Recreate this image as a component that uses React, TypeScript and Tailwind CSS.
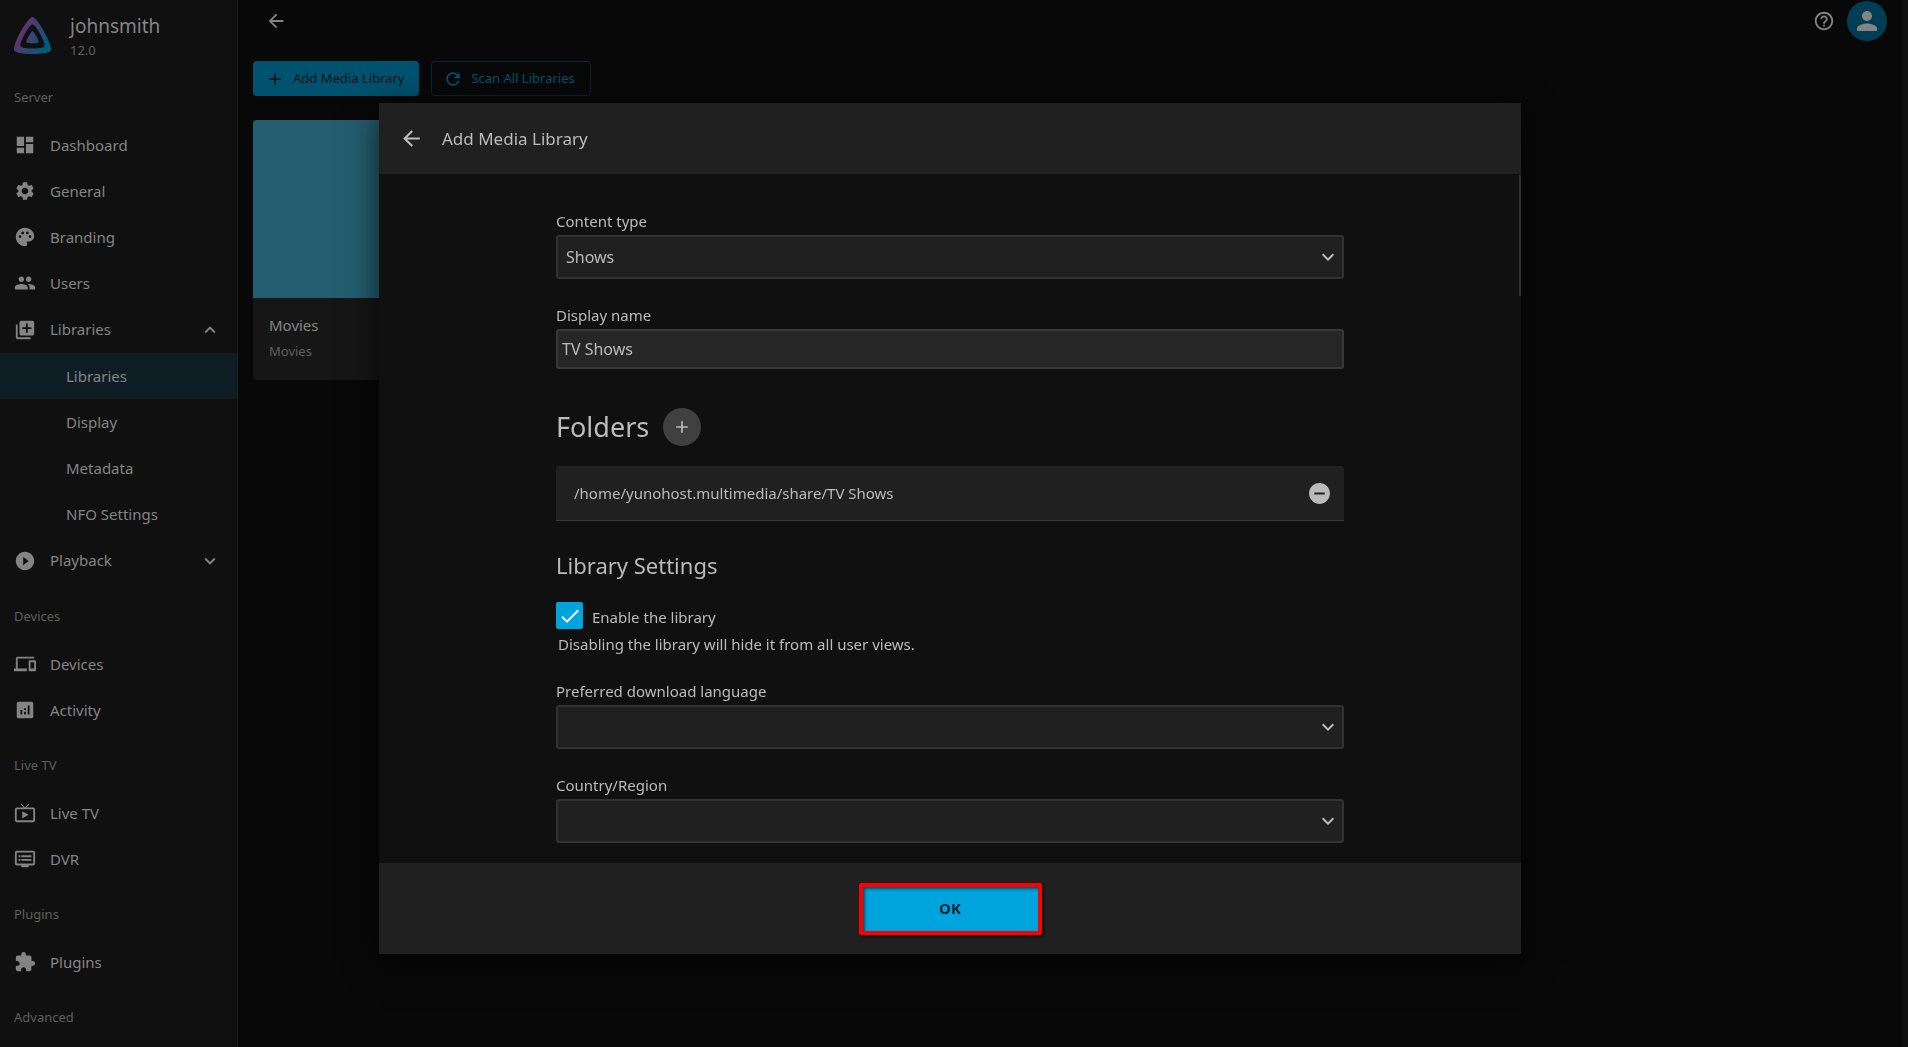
import React, { useState } from 'react';
import type { IconType } from 'react-icons';
import {
  MdAdd, MdAnalytics, MdArrowBack, MdCheck, MdDashboard, MdDevices, MdDvr,
  MdExpandLess, MdExpandMore, MdExtension, MdHelpOutline, MdLibraryAdd, MdLiveTv,
  MdPalette, MdPeople, MdPerson, MdPlayCircleFilled, MdRefresh, MdRemoveCircle, MdSettings
} from 'react-icons/md';

type NavItem = {
  label: string;
  icon: IconType;
  open?: boolean;
  children?: string[];
};

const sections: { title: string; items: NavItem[] }[] = [
  {
    title: 'Server',
    items: [
      { label: 'Dashboard', icon: MdDashboard },
      { label: 'General', icon: MdSettings },
      { label: 'Branding', icon: MdPalette },
      { label: 'Users', icon: MdPeople },
      { label: 'Libraries', icon: MdLibraryAdd, open: true, children: ['Libraries', 'Display', 'Metadata', 'NFO Settings'] },
      { label: 'Playback', icon: MdPlayCircleFilled, open: false, children: [] }
    ]
  },
  {
    title: 'Devices',
    items: [
      { label: 'Devices', icon: MdDevices },
      { label: 'Activity', icon: MdAnalytics }
    ]
  },
  {
    title: 'Live TV',
    items: [
      { label: 'Live TV', icon: MdLiveTv },
      { label: 'DVR', icon: MdDvr }
    ]
  },
  { title: 'Plugins', items: [{ label: 'Plugins', icon: MdExtension }] },
  { title: 'Advanced', items: [] }
];

function Logo() {
  return (
    <svg viewBox="0 0 24 24" className="mt-[3px] size-[37px] shrink-0" aria-hidden="true">
      <defs>
        <linearGradient id="logo" gradientUnits="userSpaceOnUse" x1="5" y1="9" x2="21" y2="18">
          <stop offset="0" stopColor="#5f3470" />
          <stop offset="1" stopColor="#005b7c" />
        </linearGradient>
      </defs>
      <path
        fill="url(#logo)"
        d="M12 .002C8.826.002-1.398 18.537.16 21.666c1.56 3.129 22.14 3.094 23.682 0C25.384 18.573 15.177 0 12 0zm7.76 18.949c-1.008 2.028-14.493 2.05-15.514 0C3.224 16.9 9.92 4.755 12.003 4.755c2.081 0 8.77 12.166 7.759 14.196zM12 9.198c-1.054 0-4.446 6.15-3.93 7.189.518 1.04 7.348 1.027 7.86 0 .511-1.027-2.874-7.19-3.93-7.19z"
      />
    </svg>
  );
}

function NavRow({ item }: { item: NavItem }) {
  const Icon = item.icon;
  const content = (
    <>
      <Icon className="size-[22px] shrink-0" />
      <span className="flex-1 text-left">{item.label}</span>
    </>
  );

  if (!item.children) {
    return (
      <li>
        <a href="#" className="flex h-[46px] items-center gap-[14px] px-[14px]">{content}</a>
      </li>
    );
  }

  const Chevron = item.open ? MdExpandLess : MdExpandMore;
  return (
    <li>
      <button type="button" className="flex h-[47px] w-full items-center gap-[14px] pl-[14px] pr-4">
        {content}
        <Chevron className="size-[22px]" />
      </button>
      {item.children.length > 0 && (
        <ul>
          {item.children.map((child, index) => (
            <li key={child}>
              <a href="#" className={`flex h-[46px] items-center pl-[66px] ${index === 0 ? 'bg-[#0e1d24]' : ''}`}>
                {child}
              </a>
            </li>
          ))}
        </ul>
      )}
    </li>
  );
}

function Sidebar() {
  return (
    <aside className="h-screen w-[238px] shrink-0 overflow-hidden border-r border-[#1e1e1e] bg-[#101010] text-[15px] text-[#848484]">
      <div className="flex h-[74px] items-start gap-[19px] px-[14px] pt-[14px]">
        <Logo />
        <div>
          <div className="text-[19px] leading-6">johnsmith</div>
          <div className="text-[13px] leading-6 text-[#5e5e5e]">12.0</div>
        </div>
      </div>
      <nav>
        {sections.map(section => (
          <section key={section.title} className="mb-[9px]">
            <h2 className="px-[14px] pb-[2px] text-[13px] leading-[46px] text-[#5e5e5e]">{section.title}</h2>
            <ul>
              {section.items.map(item => <NavRow key={item.label} item={item} />)}
            </ul>
          </section>
        ))}
      </nav>
    </aside>
  );
}

function SelectField({ id, label, options }: { id: string; label: string; options: string[] }) {
  return (
    <div className="mb-[26px]">
      <label htmlFor={id} className="mb-1 block leading-5">{label}</label>
      <div className="relative">
        <select
          id={id}
          className="block h-11 w-full appearance-none rounded-[3px] border-2 border-[#323232] bg-[#202020] px-2 text-base"
        >
          {options.map(option => <option key={option}>{option}</option>)}
        </select>
        <MdExpandMore className="pointer-events-none absolute right-1 top-[10px] size-6" />
      </div>
    </div>
  );
}

function AddLibraryDialog() {
  const [name, setName] = useState('TV Shows');
  const [enabled, setEnabled] = useState(true);

  return (
    <div className="fixed inset-0 flex justify-center pb-[93px] pr-2 pt-[103px]">
      <div
        role="dialog"
        aria-labelledby="dialog-title"
        className="flex h-full w-full max-w-[1142px] flex-col bg-[#101010] text-[15px] text-[#bbbbbb] shadow-[0_8px_32px_rgba(0,0,0,0.7)]"
      >
        <header className="flex h-[71px] shrink-0 items-center gap-[18px] bg-[#202020] px-5">
          <button type="button" aria-label="Back"><MdArrowBack className="size-[25px]" /></button>
          <h1 id="dialog-title" className="text-[17px]">Add Media Library</h1>
        </header>

        <div className="relative min-h-0 flex-1 overflow-hidden">
          <form className="mx-auto max-w-[788px] pt-[37px]">
            <SelectField id="content-type" label="Content type" options={['Shows', 'Movies', 'Music']} />

            <div className="mb-[39px]">
              <label htmlFor="display-name" className="mb-1 block leading-5">Display name</label>
              <input
                id="display-name"
                type="text"
                value={name}
                onChange={e => setName(e.target.value)}
                className="block h-10 w-full rounded-[3px] border-2 border-[#383838] bg-[#262626] px-1 text-base"
              />
            </div>

            <div className="mb-5 flex items-center gap-[14px]">
              <h2 className="text-[27px] leading-[38px]">Folders</h2>
              <button type="button" aria-label="Add folder" className="flex size-[38px] items-center justify-center rounded-full bg-[#404040]">
                <MdAdd className="size-5" />
              </button>
            </div>
            <div className="mb-7 flex h-[55px] items-center justify-between rounded-t-[3px] border-b border-[#3a3a3a] bg-[#202020] pl-[18px] pr-3">
              <span>/home/yunohost.multimedia/share/TV Shows</span>
              <button type="button" aria-label="Remove folder"><MdRemoveCircle className="size-[25px]" /></button>
            </div>

            <h2 className="mb-[21px] text-[22px] leading-8">Library Settings</h2>
            <div className="flex items-end gap-[9px]">
              <div className="relative size-[27px]">
                <input
                  id="enable-library"
                  type="checkbox"
                  checked={enabled}
                  onChange={e => setEnabled(e.target.checked)}
                  className="block size-[27px] appearance-none rounded-xs border-2 border-[#323232] checked:border-[#00a4dc] checked:bg-[#00a4dc]"
                />
                {enabled && <MdCheck className="pointer-events-none absolute inset-0 m-auto size-6 text-white" />}
              </div>
              <label htmlFor="enable-library" className="leading-6">Enable the library</label>
            </div>
            <p className="mb-[22px] pl-[2px] leading-[30px]">Disabling the library will hide it from all user views.</p>

            <SelectField id="language" label="Preferred download language" options={['', 'English', 'French']} />
            <SelectField id="country" label="Country/Region" options={['', 'France', 'United States']} />
          </form>
          <div className="absolute right-0 top-px h-[121px] w-[2px] bg-[#303030]" />
        </div>

        <footer className="flex h-[91px] shrink-0 items-center justify-center bg-[#202020]">
          <div className="rounded-xs border-4 border-[#ff0000] bg-[#00a4dc] shadow-[2px_2px_3px_rgba(0,0,0,0.6)]">
            <button type="button" className="block h-11 w-[175px] font-bold text-[#06202a] shadow-[inset_2px_2px_3px_rgba(0,0,0,0.5)]">
              OK
            </button>
          </div>
        </footer>
      </div>
    </div>
  );
}

export default function App() {
  return (
    <div className="flex h-screen overflow-hidden bg-[#080808] font-['Noto_Sans',sans-serif]">
      <Sidebar />
      <main className="flex-1 text-[#848484]">
        <header className="flex h-[42px] items-center justify-between pl-[27px] pr-[15px]">
          <button type="button" aria-label="Back"><MdArrowBack className="size-[22px]" /></button>
          <div className="flex items-center gap-3">
            <button type="button" aria-label="Help"><MdHelpOutline className="size-[22px]" /></button>
            <button type="button" aria-label="Account" className="flex size-10 items-center justify-center rounded-full bg-[#003e56]">
              <MdPerson className="size-[30px]" />
            </button>
          </div>
        </header>

        <div className="px-[15px] pt-[19px]">
          <div className="mb-6 flex gap-3 text-[13px]">
            <button type="button" className="flex h-[35px] items-center gap-2 rounded bg-[#00526e] pl-3 pr-[15px] text-[#00141b]">
              <MdAdd className="size-5" />
              Add Media Library
            </button>
            <button type="button" className="flex h-[35px] items-center gap-2 rounded border border-[#002937] pl-[11px] pr-[15px] text-[#00526e]">
              <MdRefresh className="size-5" />
              Scan All Libraries
            </button>
          </div>

          <article className="w-[316px] overflow-hidden rounded bg-[#161616]">
            <div className="h-[178px] bg-[#245e70]" />
            <div className="h-[82px] px-4 pt-[15px]">
              <h3 className="mb-[2px] text-[15px] leading-6">Movies</h3>
              <p className="text-[13px] leading-6 text-[#5e5e5e]">Movies</p>
            </div>
          </article>
        </div>
      </main>
      <div className="w-[6px] shrink-0 bg-[#101010]" />
      <AddLibraryDialog />
    </div>
  );
}
